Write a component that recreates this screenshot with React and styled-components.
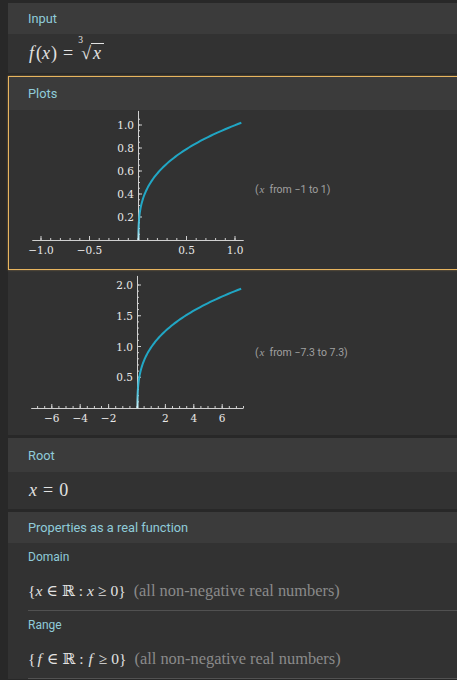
import React from 'react';
import styled, { createGlobalStyle } from 'styled-components';

const GlobalStyle = createGlobalStyle`
  html, body {
    margin: 0;
    padding: 0;
    background: #282828;
    overflow: hidden;
  }
  body {
    font-family: Roboto, "Liberation Sans", sans-serif;
  }
`;

const Page = styled.div`
  padding: 3px 0 0 8px;
  width: 480px;
`;

const Panel = styled.div`
  display: flex;
  flex-direction: column;
  gap: 3px;
`;

const Pod = styled.section`
  background: #323232;
`;

// the highlighted (hovered) sub-pod gets the orange frame
const Highlight = styled.div`
  border: 1px solid #e8b55f;
  border-right: none;
  box-shadow: 0 0 2px rgba(232, 181, 95, 0.45);
`;

const PodHeader = styled.div`
  background: #3b3b3b;
  height: ${(p) => p.h || 31}px;
  display: flex;
  align-items: center;
  padding-left: ${(p) => (p.inset ? 19 : 20)}px;
  font-size: 12.8px;
  color: #8fcbd9;
`;

const PodBody = styled.div`
  height: ${(p) => p.h || 40}px;
  display: flex;
  align-items: center;
  padding-left: 20px;
`;

const SubSection = styled.div`
  margin-left: 20px;
  border-bottom: 1px solid #515151;
  display: flex;
  flex-direction: column;
`;

const SubLabel = styled.div`
  font-size: 12px;
  color: #8fcbd9;
  height: 28px;
  display: flex;
  align-items: center;
`;

const SubValue = styled.div`
  height: 39px;
  display: flex;
  align-items: center;
`;

const MathLine = styled.div`
  font-family: "Liberation Serif", "DejaVu Serif", serif;
  font-size: ${(p) => p.size || 18}px;
  color: #e2e2e2;
  white-space: nowrap;
  display: flex;
  align-items: baseline;
`;

const V = styled.span`
  font-style: italic;
  margin: 0 ${(p) => p.r || 0}px 0 ${(p) => p.l || 0}px;
`;

const Op = styled.span`
  margin: 0 ${(p) => p.m || 4}px;
`;

const Radical = styled.span`
  position: relative;
  display: inline-flex;
  align-items: baseline;
  padding-left: 2px;
`;

const Index = styled.span`
  position: absolute;
  left: -1px;
  top: -8px;
  font-size: 9.5px;
  font-style: normal;
`;

const Radicand = styled.span`
  border-top: 1px solid #e2e2e2;
  padding: 0 3px 0 2px;
  font-style: italic;
  line-height: 18px;
`;

const Note = styled.span`
  color: #8a8a8a;
  margin-left: 8px;
  font-size: 16.4px;
`;

const PlotRow = styled.div`
  display: flex;
  align-items: center;
  padding-left: ${(p) => (p.inset ? 19 : 20)}px;
  height: ${(p) => p.h}px;
`;

const Caption = styled.div`
  font-size: 10.5px;
  color: #a0a0a0;
  white-space: nowrap;
  i {
    font-family: "Liberation Serif", serif;
    font-size: 11px;
    margin: 0 5px 0 1px;
  }
`;

const abs = (v) => (v < 0 ? -v : v);
const fmt = (v, d) => (v < 0 ? '\u2212' : '') + abs(v).toFixed(d);

function Plot({ id, w, h, ox, oy, sx, sy, xFrom, xTo, yTop, xMinor, yMinor, xLabels, yLabels, dec, xMax }) {
  const ticks = [];
  const start = Math.ceil(xFrom / xMinor);
  const end = Math.floor(xTo / xMinor);
  for (let i = start; i <= end; i++) {
    const x = ox + i * xMinor * sx;
    ticks.push(<line key={'x' + i} x1={x} x2={x} y1={oy} y2={oy - 2} />);
  }
  for (let i = 1; i * yMinor <= yTop + 1e-9; i++) {
    const y = oy - i * yMinor * sy;
    ticks.push(<line key={'y' + i} x1={ox} x2={ox + 2} y1={y} y2={y} />);
  }
  const pts = [];
  const tMax = Math.cbrt(xMax);
  for (let i = 0; i <= 90; i++) {
    const t = (tMax * i) / 90;
    pts.push(`${(ox + 0.5 + t * t * t * sx).toFixed(2)},${(oy - t * sy).toFixed(2)}`);
  }
  return (
    <svg width={w} height={h} style={{ display: 'block', flex: 'none' }}>
      <defs>
        <linearGradient id={id} x1="0" y1={oy} x2="0" y2={oy - yTop * sy} gradientUnits="userSpaceOnUse">
          <stop offset="0" stopColor="#d6f8ff" />
          <stop offset="0.1" stopColor="#5cc8e0" />
          <stop offset="0.25" stopColor="#22a8c6" />
          <stop offset="1" stopColor="#1fa5c3" />
        </linearGradient>
      </defs>
      <g stroke="#d0d0d0" strokeWidth="1">
        <line x1={ox + xFrom * sx} x2={ox + xTo * sx} y1={oy + 0.5} y2={oy + 0.5} />
        <line x1={ox + 0.5} x2={ox + 0.5} y1={oy} y2={oy - yTop * sy - 6} />
        {ticks}
        {xLabels.map((v) => (
          <line key={'X' + v} x1={ox + v * sx} x2={ox + v * sx} y1={oy} y2={oy - 4} />
        ))}
        {yLabels.map((v) => (
          <line key={'Y' + v} x1={ox} x2={ox + 4} y1={oy - v * sy} y2={oy - v * sy} />
        ))}
      </g>
      <polyline points={pts.join(' ')} fill="none" stroke={`url(#${id})`} strokeWidth="2" />
      <g fill="#e8e8e8" fontFamily='"DejaVu Serif", "Liberation Serif", serif' fontSize="10.5">
        {xLabels.map((v) => (
          <text key={'tx' + v} x={ox + v * sx} y={oy + 14} textAnchor="middle">
            {fmt(v, dec)}
          </text>
        ))}
        {yLabels.map((v) => (
          <text key={'ty' + v} x={ox - 4} y={oy - v * sy + 4} textAnchor="end">
            {fmt(v, 1)}
          </text>
        ))}
      </g>
    </svg>
  );
}

export default function App() {
  return (
    <>
      <GlobalStyle />
      <Page>
        <Panel>
          <Pod>
            <PodHeader h={31}>Input</PodHeader>
            <PodBody h={39}>
              <MathLine>
                <V l={1} r={2}>f</V>(<V r={1}>x</V>)<Op m={6}>=</Op>
                <Radical>
                  <Index>3</Index>
                  <span>√</span>
                  <Radicand>x</Radicand>
                </Radical>
              </MathLine>
            </PodBody>
          </Pod>

          <Pod>
            <Highlight>
              <PodHeader h={33} inset>
                Plots
              </PodHeader>
              <PlotRow h={159} inset>
                <Plot
                  id="p1"
                  w={227}
                  h={159}
                  ox={110}
                  oy={130}
                  sx={97}
                  sy={115}
                  xFrom={-1.09}
                  xTo={1.09}
                  yTop={1.07}
                  xMinor={0.1}
                  yMinor={0.05}
                  xLabels={[-1, -0.5, 0.5, 1]}
                  yLabels={[0.2, 0.4, 0.6, 0.8, 1]}
                  dec={1}
                  xMax={1.06}
                />
                <Caption>
                  (<i>x</i>from −1 to 1)
                </Caption>
              </PlotRow>
            </Highlight>
            <PlotRow h={165}>
              <Plot
                id="p2"
                w={227}
                h={165}
                ox={109}
                oy={138}
                sx={14.2}
                sy={61.5}
                xFrom={-7.45}
                xTo={7.5}
                yTop={2.05}
                xMinor={0.5}
                yMinor={0.1}
                xLabels={[-6, -4, -2, 2, 4, 6]}
                yLabels={[0.5, 1, 1.5, 2]}
                dec={0}
                xMax={7.3}
              />
              <Caption>
                (<i>x</i>from −7.3 to 7.3)
              </Caption>
            </PlotRow>
          </Pod>

          <Pod>
            <PodHeader h={34}>Root</PodHeader>
            <PodBody h={37}>
              <MathLine>
                <V l={1}>x</V>
                <Op m={6}>=</Op>0
              </MathLine>
            </PodBody>
          </Pod>

          <Pod>
            <PodHeader h={31}>Properties as a real function</PodHeader>
            <SubSection>
              <SubLabel>Domain</SubLabel>
              <SubValue>
                <MathLine size={15.5}>
                  <span>{'{'}</span>
                  <V>x</V>
                  <Op m={4}>∈</Op>ℝ<Op m={4}>:</Op>
                  <V>x</V>
                  <Op m={4}>≥</Op>0<span>{'}'}</span>
                  <Note>(all non-negative real numbers)</Note>
                </MathLine>
              </SubValue>
            </SubSection>
            <SubSection>
              <SubLabel>Range</SubLabel>
              <SubValue>
                <MathLine size={15.5}>
                  <span>{'{'}</span>
                  <V l={2} r={1}>f</V>
                  <Op m={4}>∈</Op>ℝ<Op m={4}>:</Op>
                  <V l={1} r={2}>f</V>
                  <Op m={4}>≥</Op>0<span>{'}'}</span>
                  <Note>(all non-negative real numbers)</Note>
                </MathLine>
              </SubValue>
            </SubSection>
          </Pod>
        </Panel>
      </Page>
    </>
  );
}
